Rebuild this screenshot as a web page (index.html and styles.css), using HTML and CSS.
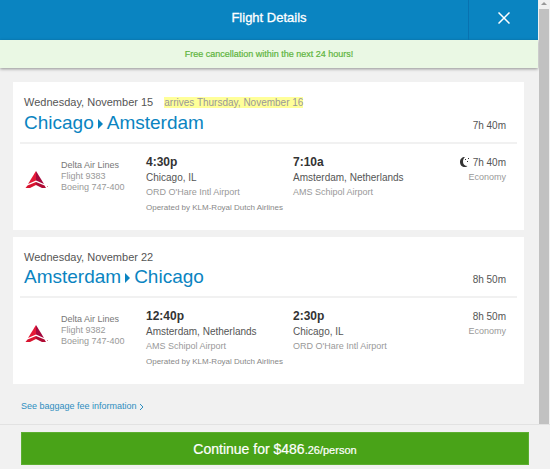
FILE: index.html
```html
<!DOCTYPE html>
<html lang="en">
<head>
<meta charset="utf-8">
<title>Flight Details</title>
<link rel="stylesheet" href="styles.css">
</head>
<body>
<svg class="defs" aria-hidden="true">
  <symbol id="delta" viewBox="0 0 24 18">
    <path d="M11 0v9.500L3 13z" fill="#e51937"/>
    <path d="M11 0l8 13-8-3.500z" fill="#a6093d"/>
    <path d="M11 11L19.500 14.500L21 17H17L11 14z" fill="#b00b34"/>
    <path d="M0.500 17L2.500 14.500L11 11V14L5 17z" fill="#d8142f"/>
    <path d="M22 15h1v1h-1z" fill="#dc8b98"/>
  </symbol>
</svg>
<div class="viewport">
  <div class="page">
    <header class="bar">
      <h1>Flight Details</h1>
      <button class="close" type="button" aria-label="Close"><svg viewBox="0 0 12 12"><path d="M0.500 0.500l11 11M11.500 0.500L0.500 11.500"/></svg></button>
    </header>
    <p class="notice">Free cancellation within the next 24 hours!</p>
    <main>
      <section class="card">
        <p class="date">Wednesday, November 15 <mark>arrives Thursday, November 16</mark></p>
        <div class="route"><h2>Chicago<i class="arrow"></i>Amsterdam</h2><span class="total">7h 40m</span></div>
        <div class="leg">
          <svg class="logo" aria-hidden="true"><use href="#delta"/></svg>
          <p class="plane"><span>Delta Air Lines</span><br>Flight 9383<br>Boeing 747-400</p>
          <div class="stop">
            <strong>4:30p</strong>
            <p class="city">Chicago, IL</p>
            <p class="airport">ORD O'Hare Intl Airport</p>
            <p class="operator">Operated by KLM-Royal Dutch Airlines</p>
          </div>
          <div class="stop">
            <strong>7:10a</strong>
            <p class="city">Amsterdam, Netherlands</p>
            <p class="airport">AMS Schipol Airport</p>
          </div>
          <div class="cabin">
            <p class="time"><svg class="moon" viewBox="0 0 10 10" aria-hidden="true"><path d="M5 0C2 0 0 2 0 5s2 5 5 5c1 0 2-.5 2.500-1C4.500 9 3 7 3 5s.5-4 2-5z"/><path d="M5 2h1v1H5zM8 1h1v1H8zM7 4h1v1H7z"/></svg>7h 40m</p>
            <p class="class">Economy</p>
          </div>
        </div>
      </section>
      <section class="card">
        <p class="date">Wednesday, November 22</p>
        <div class="route"><h2>Amsterdam<i class="arrow"></i>Chicago</h2><span class="total">8h 50m</span></div>
        <div class="leg">
          <svg class="logo" aria-hidden="true"><use href="#delta"/></svg>
          <p class="plane"><span>Delta Air Lines</span><br>Flight 9382<br>Boeing 747-400</p>
          <div class="stop">
            <strong>12:40p</strong>
            <p class="city">Amsterdam, Netherlands</p>
            <p class="airport">AMS Schipol Airport</p>
            <p class="operator">Operated by KLM-Royal Dutch Airlines</p>
          </div>
          <div class="stop">
            <strong>2:30p</strong>
            <p class="city">Chicago, IL</p>
            <p class="airport">ORD O'Hare Intl Airport</p>
          </div>
          <div class="cabin">
            <p class="time">8h 50m</p>
            <p class="class">Economy</p>
          </div>
        </div>
      </section>
      <a class="baggage" href="#">See baggage fee information<svg viewBox="0 0 5 8" aria-hidden="true"><path d="M1 1l3 3-3 3"/></svg></a>
    </main>
  </div>
  <div class="scroll" aria-hidden="true"><i class="up"></i><i class="thumb"></i></div>
</div>
<footer><button class="continue" type="button">Continue for $486<small>.26/person</small></button></footer>
</body>
</html>
```

FILE: styles.css
```css
* { box-sizing: border-box; }
body {
  margin: 0;
  min-height: 100vh;
  display: flex;
  flex-direction: column;
  background: #f1f1f1;
  color: #555;
  font-family: "Liberation Sans", Arial, sans-serif;
  font-size: 10px;
}
h1, h2, p { margin: 0; font-weight: normal; }
button { font-family: inherit; border: 0; padding: 0; color: #fff; }
.defs { display: none; }
.viewport { flex: 1; display: flex; }
.page { flex: 1; }

.bar {
  display: grid;
  grid-template-columns: 70px 1fr 70px;
  height: 40px;
  background: #0a84c1;
  color: #fff;
}
h1 { grid-column: 2; font-size: 13px; line-height: 36px; text-align: center; -webkit-text-stroke: 0.3px #fff; }
.close {
  display: flex;
  align-items: center;
  justify-content: center;
  padding-bottom: 4px;
  background: none;
  border-left: 1px solid #0872b0;
}
.close svg { width: 12px; height: 12px; fill: none; stroke: #fff; stroke-width: 1.5; }
.notice {
  height: 28px;
  line-height: 28px;
  background: #eaf8e4;
  box-shadow: 0 1px 3px rgba(0, 0, 0, 0.4);
  color: #5db43c;
  font-size: 9px;
  text-align: center;
  -webkit-text-stroke: 0.2px #5db43c;
}

main { padding: 14px 14px 0 13px; }
.card { margin-bottom: 7px; padding: 12px 7px 15px; background: #fff; }
.date { padding-left: 4px; font-size: 11px; line-height: 16px; }
mark { margin-left: 8px; background: #ffff99; color: #999; font-size: 10px; }
.route {
  display: flex;
  justify-content: space-between;
  align-items: flex-end;
  height: 33px;
  padding: 0 11px 9px 4px;
  border-bottom: 2px solid #f1f1f1;
}
h2 { color: #0a84c1; font-size: 19px; line-height: 20px; }
.arrow {
  display: inline-block;
  margin: 0 4px;
  border: solid transparent;
  border-width: 5px 0 5px 5px;
  border-left-color: #0a84c1;
}
.total { line-height: 14px; }
.leg {
  display: grid;
  grid-template-columns: 41px 85px 147px 1fr auto;
  padding: 10px 11px 0 0;
}
.logo { width: 24px; height: 18px; margin: 17px 0 0 5px; }
.plane { padding-top: 6px; color: #999; font-size: 9px; line-height: 11px; }
.plane span { color: #777; }
.stop strong { display: block; color: #333; font-size: 12px; line-height: 16px; }
.city { line-height: 15px; }
.airport { color: #999; font-size: 9px; line-height: 14px; }
.operator { padding-top: 2px; color: #888; font-size: 8px; line-height: 14px; white-space: nowrap; }
.cabin { text-align: right; }
.time { line-height: 17px; }
.moon { width: 10px; height: 10px; margin-right: 3px; vertical-align: -1px; fill: #333; }
.class { color: #999; font-size: 9px; line-height: 12px; }
.baggage {
  display: inline-block;
  margin-left: 8px;
  padding: 8px 0;
  color: #2e8ec0;
  font-size: 9px;
  line-height: 14px;
  text-decoration: none;
}
.baggage svg { width: 5px; height: 8px; margin-left: 2px; vertical-align: -2px; fill: none; stroke: currentColor; }

.scroll { display: flex; flex-direction: column; width: 12px; padding: 0 1px; }
.up { align-self: center; margin: 2px 0 4px; border: solid transparent; border-width: 0 3px 3px; border-bottom-color: #999; }
.thumb { flex: 1; background: #c1c1c1; }

footer { padding: 7px 21px 4px; border-top: 1px solid #e2e2e2; }
.continue { display: block; width: 100%; height: 33px; background: #49a318; border: 1px solid #5cae30; font-size: 14px; -webkit-text-stroke: 0.2px #fff; }
.continue small { font-size: 11px; }
```
